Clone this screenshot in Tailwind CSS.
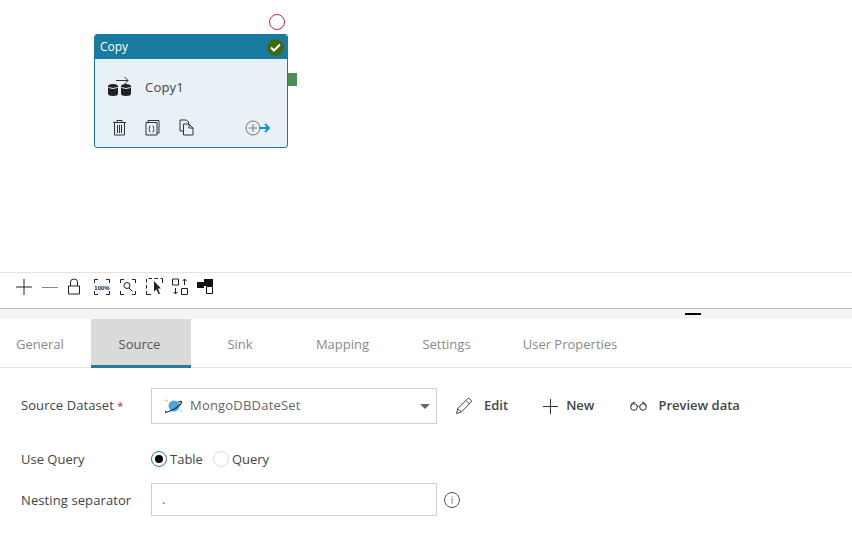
<!DOCTYPE html>
<html lang="en">
  <head>
    <meta charset="UTF-8" />
    <meta name="viewport" content="width=device-width, initial-scale=1.0" />
    <title>Copy pipeline</title>
    <script src="https://cdn.jsdelivr.net/npm/@tailwindcss/browser@4"></script>
  </head>
  <body class="bg-white w-[852px] h-[552px] overflow-hidden font-['Open_Sans',sans-serif] text-[13px] text-[#444]">
    <!-- canvas -->
    <div class="relative h-[272px]">
      <div class="absolute left-[269px] top-[14px] w-[16px] h-[16px] rounded-full border border-[#d0262c] bg-white"></div>
      <div class="absolute left-[288px] top-[73px] w-[9px] h-[13px] bg-[#4c8f50]"></div>
      <div class="absolute left-[94px] top-[34px] w-[194px] h-[114px] rounded-[3px] border border-[#1a7ba1] bg-[#e8f1f6] flex flex-col overflow-hidden">
        <div class="h-[24px] shrink-0 bg-[#1a7ba1] text-white flex items-center justify-between pl-[5px] pr-[3px] text-[12px] font-medium">
          <span>Copy</span>
          <span class="w-[17px] h-[17px] rounded-full bg-[#3f6b10] flex items-center justify-center">
            <svg width="11" height="9" viewBox="0 0 11 9" fill="none" stroke="#fff" stroke-width="2"><path d="M1 4.5 L4 7.5 L10 1.5"/></svg>
          </span>
        </div>
        <div class="flex items-center pl-[12px] pt-[15px] h-[44px] gap-[12px]">
          <svg width="26" height="22" viewBox="0 0 26 22" class="shrink-0 mb-[5px]">
            <path d="M9 5.5 H21 M17.5 2 L21 5.5 L17.5 9" fill="none" stroke="#333" stroke-width="1"/>
            <path d="M1 11.5 Q1 9 6 9 Q11 9 11 11.5 V18.5 Q11 21 6 21 Q1 21 1 18.5 Z" fill="#222"/>
            <path d="M14 11.5 Q14 9 19 9 Q24 9 24 11.5 V18.5 Q24 21 19 21 Q14 21 14 18.5 Z" fill="#222"/>
            <path d="M1.5 12.5 Q6 14.5 10.5 12.5 M14.5 12.5 Q19 14.5 23.5 12.5" fill="none" stroke="#e8f1f6" stroke-width="1"/>
          </svg>
          <span class="text-[#444] text-[13px] tracking-[0.2px] mb-[2px]">Copy1</span>
        </div>
        <div class="flex items-center pl-[17px] pt-[16px] text-[#333]">
          <svg width="15" height="17" viewBox="0 0 15 17" fill="none" stroke="#333" class="shrink-0">
            <path d="M1 3.5 H14 M5 3.5 V1.5 H10 V3.5 M2.5 3.5 V16 H12.5 V3.5 M5.5 6 V14 M7.5 6 V14 M9.5 6 V14"/>
          </svg>
          <svg width="15" height="17" viewBox="0 0 15 17" fill="none" stroke="#333" class="shrink-0 ml-[18px]">
            <path d="M1 3.5 H12 V16 H1 Z M3 3.5 V1.5 H14 V14 H12"/>
            <path d="M5.5 7 Q4.5 7 4.5 8 V9.2 L3.8 10 L4.5 10.8 V12 Q4.5 13 5.5 13 M7.5 7 Q8.5 7 8.5 8 V9.2 L9.2 10 L8.5 10.8 V12 Q8.5 13 7.5 13" stroke-width="0.9"/>
          </svg>
          <svg width="15" height="17" viewBox="0 0 15 17" fill="none" stroke="#333" class="shrink-0 ml-[19px]">
            <path d="M4.5 12 H1 V1 H7.5 L9.5 3 V5"/>
            <path d="M4.5 5 H10 L14 9 V16 H4.5 Z M10 5 V9 H14"/>
          </svg>
          <svg width="26" height="16" viewBox="0 0 26 16" fill="none" class="shrink-0 ml-[51px]">
            <circle cx="8" cy="8" r="7" stroke="#777"/>
            <path d="M4 8 H12 M8 4 V12" stroke="#777"/>
            <path d="M14 8 H24 M20 4 L24 8 L20 12" stroke="#0e9ad0" stroke-width="2"/>
          </svg>
        </div>
      </div>
    </div>

    <!-- toolbar -->
    <div class="h-[37px] border-y border-t-[#e3e3e3] border-b-[#bdbdbd] flex items-center pl-[16px] pb-[8px]">
      <svg width="16" height="16" viewBox="0 0 16 16" fill="none" stroke="#222"><path d="M0 8 H16 M8 0 V16"/></svg>
      <svg width="16" height="16" viewBox="0 0 16 16" fill="none" stroke="#888" class="ml-[10px]"><path d="M0 8.5 H16"/></svg>
      <svg width="12" height="17" viewBox="0 0 12 17" fill="none" stroke="#222" class="ml-[10px]"><path d="M.5 8 H11.5 V16 H.5 Z M2.5 8 V4 Q2.5 1 6 1 Q9.5 1 9.5 4 V8"/></svg>
      <svg width="16" height="16" viewBox="0 0 16 16" fill="none" stroke="#222" class="ml-[14px]"><path d="M.5 4 V.5 H4 M12 .5 H15.5 V4 M15.5 12 V15.5 H12 M4 15.5 H.5 V12"/><text x="8" y="10.5" text-anchor="middle" font-size="6" font-weight="700" fill="#222" stroke="none" font-family="Liberation Sans">100%</text></svg>
      <svg width="16" height="16" viewBox="0 0 16 16" fill="none" stroke="#222" class="ml-[10px]"><path d="M.5 4 V.5 H4 M12 .5 H15.5 V4 M15.5 12 V15.5 H12 M4 15.5 H.5 V12"/><circle cx="7" cy="6.5" r="3"/><path d="M9 9 L12.5 12.5"/></svg>
      <svg width="17" height="17" viewBox="0 0 17 17" fill="none" stroke="#222" class="ml-[10px]"><path d="M.5 16.5 V.5 H16.5" stroke-dasharray="3.5 2.5"/><path d="M16.5 .5 V5 M.5 16.5 H5" /><path d="M8 3 L15 10.5 L12 10.5 L14 16 L12.5 16 L10.5 11.5 L8 13.5 Z" fill="#222" stroke="none"/></svg>
      <svg width="16" height="17" viewBox="0 0 16 17" fill="none" stroke="#222" class="ml-[9px]"><path d="M.5 1 H6.5 V7 H.5 Z M9.5 10.5 H15.5 V16.5 H9.5 Z"/><path d="M12.5 7 V1 M10.5 3 L12.5 1 L14.5 3 M3.5 10 V16 M1.5 14 L3.5 16 L5.5 14"/></svg>
      <svg width="17" height="16" viewBox="0 0 17 16" fill="none" stroke="#111" class="ml-[9px]"><path d="M0 3 H7 V9 H0 Z M7 0 H16 V7 H7 Z" fill="#111" stroke="none"/><path d="M9.5 7.5 H15.5 V14.5 H9.5 Z"/></svg>
    </div>

    <!-- splitter strip -->
    <div class="relative h-[10px] bg-[#f4f4f4]">
      <div class="absolute left-[685px] top-[4px] w-[16px] h-[2px] bg-black"></div>
    </div>

    <!-- tabs -->
    <div class="flex h-[49px] border-b border-[#e3e3e3] text-[13px] text-[#8a8a8a]">
      <div class="w-[91px] pl-[16px] pt-[4px] flex items-center">General</div>
      <div class="w-[100px] flex items-center justify-center bg-[#dadada] text-[#555] border-b-[3px] border-[#2b7a94] mb-[-1px] pt-[5px] pr-[3px]">Source</div>
      <div class="w-[98px] pt-[4px] flex items-center justify-center">Sink</div>
      <div class="w-[107px] pt-[4px] flex items-center justify-center">Mapping</div>
      <div class="w-[101px] pt-[4px] flex items-center justify-center">Settings</div>
      <div class="w-[146px] pt-[4px] flex items-center justify-center">User Properties</div>
    </div>

    <!-- form -->
    <div class="pl-[21px] pt-[20px] text-[#444]">
      <div class="flex items-center h-[36px]">
        <div class="w-[130px] tracking-[0.08px]">Source Dataset <span class="text-[#c4262e] text-[11px]">*</span></div>
        <div class="w-[286px] h-[36px] border border-[#cfcfcf] flex items-center pl-[12px] pr-[5px] text-[#666]">
          <svg width="20" height="16" viewBox="0 0 20 16" fill="none" class="shrink-0">
            <circle cx="10" cy="8" r="5.5" fill="#4aa6dc"/>
            <path d="M2 13 Q0 15.5 6 13 Q13 10.5 17 5.5 Q19 2.5 14 4" stroke="#24405c" stroke-width="1.3"/>
            <circle cx="2.5" cy="2.5" r="1" fill="#a6d24a"/>
            <circle cx="17" cy="13" r="0.8" fill="#4ad0c8"/>
          </svg>
          <span class="ml-[6px] flex-1 tracking-[0.2px]">MongoDBDateSet</span>
          <span class="w-0 h-0 border-x-[5px] border-x-transparent border-t-[5px] border-t-[#666] mr-[1px]"></span>
        </div>
        <div class="flex items-center font-semibold text-[#444]">
          <svg width="18" height="18" viewBox="0 0 18 18" fill="none" stroke="#444" class="ml-[18px]"><path d="M1.5 16.5 L2.8 11.5 L12.5 1.8 Q13.8 .8 15.5 2.5 Q17 4 16 5.2 L6.3 15 Z M2.8 11.5 L6.3 15 M11 3.5 L14.5 7"/></svg>
          <span class="ml-[11px]">Edit</span>
          <svg width="15" height="15" viewBox="0 0 15 15" fill="none" stroke="#333" class="ml-[35px]"><path d="M0 7.5 H15 M7.5 0 V15"/></svg>
          <span class="ml-[8px]">New</span>
          <svg width="17" height="10" viewBox="0 0 17 10" fill="none" stroke="#333" class="ml-[36px]"><circle cx="4" cy="6" r="3.3"/><circle cx="13" cy="6" r="3.3"/><path d="M7.3 5.5 Q8.5 4.5 9.7 5.5 M.7 5 Q2 1 5 1 M16.3 5 Q15 1 12 1"/></svg>
          <span class="ml-[11px]">Preview data</span>
        </div>
      </div>

      <div class="flex items-center h-[24px] mt-[23px]">
        <div class="w-[130px] pt-[2px]">Use Query</div>
        <span class="w-[16px] h-[16px] rounded-full border border-[#2b7a94] flex items-center justify-center">
          <span class="w-[8px] h-[8px] rounded-full bg-black"></span>
        </span>
        <span class="ml-[3px] pt-[1px]">Table</span>
        <span class="ml-[10px] w-[16px] h-[16px] rounded-full border border-[#dcdcdc]"></span>
        <span class="ml-[3px] pt-[1px]">Query</span>
      </div>

      <div class="flex items-center h-[33px] mt-[12px]">
        <div class="w-[130px] pt-[2px] tracking-[0.1px]">Nesting separator</div>
        <div class="w-[286px] h-[33px] border border-[#cfcfcf] flex items-center pl-[10px] text-[#666]">.</div>
        <span class="ml-[7px] w-[16px] h-[16px] rounded-full border border-[#555] flex items-center justify-center text-[10px] leading-none text-[#777]">i</span>
      </div>
    </div>
  </body>
</html>
